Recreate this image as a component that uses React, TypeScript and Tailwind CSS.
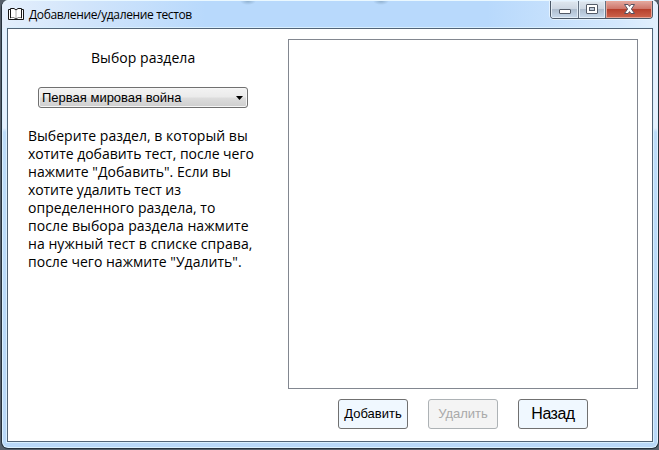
const instructions = [
  { text: 'Выберите раздел, в который вы', spacing: 'tracking-[0.03px]' },
  { text: 'хотите добавить тест, после чего', spacing: 'tracking-[-0.02px]' },
  { text: 'нажмите "Добавить". Если вы', spacing: 'tracking-[0.02px]' },
  { text: 'хотите удалить тест из', spacing: 'tracking-[-0.08px]' },
  { text: 'определенного раздела, то', spacing: 'tracking-[0.03px]' },
  { text: 'после выбора раздела нажмите', spacing: 'tracking-[0.1px]' },
  { text: 'на нужный тест в списке справа,', spacing: 'tracking-[0.06px]' },
  { text: 'после чего нажмите "Удалить".', spacing: 'tracking-[0.02px]' },
];

function BookIcon() {
  return (
    <svg width="16" height="14" viewBox="0 0 16 14" className="shrink-0">
      <path d="M2.5 2.5H.5v10h15v-10h-2" fill="#fff" stroke="#161616" />
      <path d="M2.5 11V1.5h3.5L8 3l2-1.5h3.5V11H10l-2 1-2-1Z" fill="#fff" stroke="#161616" />
      <path d="M8 3v8" stroke="#aaa" />
      <path d="M3 11.5h3.5M9.5 11.5H13" stroke="#fff" />
    </svg>
  );
}

function WindowControls() {
  return (
    <div className="flex h-[18px] w-[103px] overflow-hidden rounded-b-[4px] border border-t-0 border-[#4b5867] shadow-[0_0_0_1px_#e5f3ff]">
      <div className="w-[28px] border-r border-[#637080] bg-[linear-gradient(#dfe7ef_0%,#ccd6e2_48%,#aebdce_50%,#c9dbed_100%)] shadow-[inset_0_0_0_1px_#e3edf6]">
        <svg width="27" height="17"><rect x="8.5" y="8.5" width="11" height="4" rx="0.5" fill="#fff" stroke="#535b68" /></svg>
      </div>
      <div className="w-[27px] border-r border-[#637080] bg-[linear-gradient(#dfe7ef_0%,#ccd6e2_48%,#aebdce_50%,#c9dbed_100%)] shadow-[inset_0_0_0_1px_#e3edf6]">
        <svg width="26" height="17">
          <rect x="7.5" y="3.5" width="11" height="9" rx="0.5" fill="#fff" stroke="#535b68" />
          <rect x="10.5" y="6.5" width="5" height="3" fill="#c1ccda" stroke="#535b68" />
        </svg>
      </div>
      <div className="flex-1 bg-[linear-gradient(#e2aaa1_0%,#cf766a_45%,#b6402d_50%,#ce654c_100%)] shadow-[inset_0_0_0_1px_#e7a496]">
        <svg width="46" height="17">
          <path d="M18.5 3.5h3.6l1.4 1.9 1.4-1.9h3.6L25.4 8l3.1 4.5h-3.6l-1.4-1.9-1.4 1.9h-3.6L21.6 8Z" fill="#fff" stroke="#56505f" />
        </svg>
      </div>
    </div>
  );
}

export default function App() {
  return (
    <div className="h-[450px] w-[659px] overflow-hidden bg-[#56606b] pb-px pl-px font-['Open_Sans','Noto_Sans',sans-serif] text-black">
      <div className="flex h-[449px] flex-col rounded-[7px] border border-t-0 border-[#26313c] bg-[linear-gradient(#e5f0fd_0px,#e5f0fd_128px,#bddcf9_132px,#b9d8f8_100%)] pb-[6px] pl-[5px] pr-[5px] shadow-[inset_0_0_0_1px_#dcf1ff]">
        <header className="-ml-[5px] -mr-[5px] flex h-[28px] shrink-0 items-start justify-between rounded-t-[7px] border-t border-[#eaf8ff] bg-[radial-gradient(ellipse_8px_4px_at_246px_0px,#8fb0cf,transparent),radial-gradient(ellipse_8px_4px_at_379px_0px,#8fb0cf,transparent),linear-gradient(90deg,#e4effc_0%,#d2e5fb_12%,#b8d9fc_31%,#b8d9fc_74%,#d4e8fd_94%,#e2f0fd_100%)] pl-[6px] pr-[5px]">
          <div className="flex h-[26px] items-center gap-[5px]">
            <BookIcon />
            <span className="whitespace-nowrap pt-[2px] text-[12px] leading-[16px] tracking-[-0.36px]">Добавление/удаление тестов</span>
          </div>
          <WindowControls />
        </header>
        <main className="flex min-h-0 flex-1 border border-[#526477] bg-white shadow-[0_0_0_1px_#d9effe]">
          <section className="flex w-[280px] shrink-0 flex-col pl-[20px] pt-[20px]">
            <h1 className="ml-[63px] whitespace-nowrap text-[14px] leading-[18px] tracking-[0.05px]">Выбор раздела</h1>
            <div className="ml-[10px] mt-[20px] flex h-[21px] w-[210px] items-center justify-between rounded-[3px] border border-[#707070] bg-[linear-gradient(#f3f3f3,#ebebeb_45%,#dcdcdc_55%,#cecece)] pl-[3px] pr-[4px] font-['Liberation_Sans',Arial,sans-serif] text-[13px] leading-[19px] shadow-[inset_0_0_0_1px_#f6f6f6]">
              <span>Первая мировая война</span>
              <svg width="7" height="4"><path d="M0 0h7L3.5 4Z" /></svg>
            </div>
            <p className="mt-[19px] text-[14px] leading-[18px]">
              {instructions.map((line) => (
                <span key={line.text} className={`block whitespace-nowrap ${line.spacing}`}>{line.text}</span>
              ))}
            </p>
          </section>
          <section className="pt-[10px] font-['Liberation_Sans',Arial,sans-serif]">
            <div className="h-[350px] w-[350px] border border-[#828790] bg-white" />
            <div className="ml-[50px] mt-[10px] flex gap-[20px]">
              <button className="h-[30px] w-[70px] whitespace-nowrap rounded-[3px] border border-[#707070] bg-[#f0f8ff] text-[13px]">Добавить</button>
              <button disabled className="h-[30px] w-[70px] whitespace-nowrap rounded-[3px] border border-[#adb2b5] bg-[#f4f4f4] text-[13px] text-[#a9a9a9]">Удалить</button>
              <button className="h-[30px] w-[70px] whitespace-nowrap rounded-[3px] border border-[#707070] bg-[#f0f8ff] text-[16px] tracking-[-0.5px]">Назад</button>
            </div>
          </section>
        </main>
      </div>
    </div>
  );
}
